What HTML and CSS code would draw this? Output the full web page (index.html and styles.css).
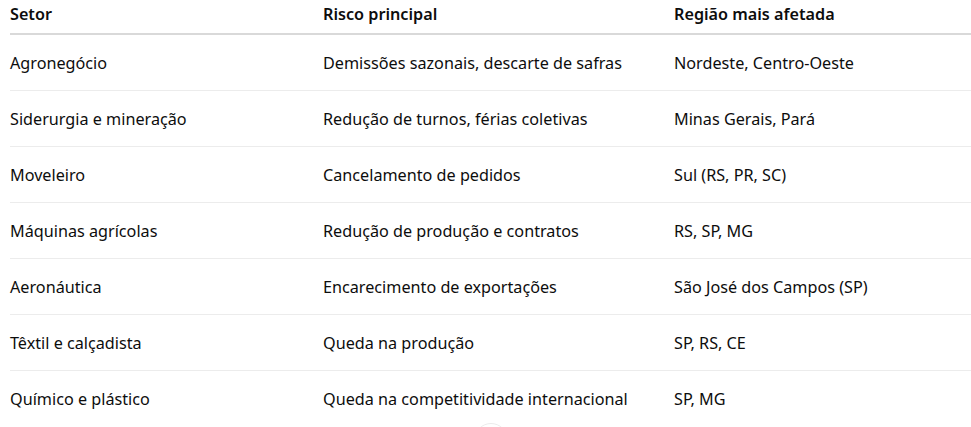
FILE: index.html
```html
<!DOCTYPE html>
<html lang="pt-BR">
<head>
<meta charset="utf-8">
<link rel="stylesheet" href="styles.css">
</head>
<body>
<div class="page">
  <table class="tbl">
    <thead>
      <tr><th>Setor</th><th>Risco principal</th><th>Região mais afetada</th></tr>
    </thead>
    <tbody>
      <tr><td>Agronegócio</td><td>Demissões sazonais, descarte de safras</td><td>Nordeste, Centro-Oeste</td></tr>
      <tr><td>Siderurgia e mineração</td><td>Redução de turnos, férias coletivas</td><td>Minas Gerais, Pará</td></tr>
      <tr><td>Moveleiro</td><td>Cancelamento de pedidos</td><td>Sul (RS, PR, SC)</td></tr>
      <tr><td>Máquinas agrícolas</td><td>Redução de produção e contratos</td><td>RS, SP, MG</td></tr>
      <tr><td>Aeronáutica</td><td>Encarecimento de exportações</td><td>São José dos Campos (SP)</td></tr>
      <tr><td>Têxtil e calçadista</td><td>Queda na produção</td><td>SP, RS, CE</td></tr>
      <tr><td>Químico e plástico</td><td>Queda na competitividade internacional</td><td>SP, MG</td></tr>
    </tbody>
  </table>
  <div class="scroll-btn"></div>
</div>
</body>
</html>
```
FILE: styles.css
```css
html, body {
  margin: 0;
  padding: 0;
  background: #ffffff;
  overflow: hidden;
}
.page {
  position: relative;
  width: 971px;
  height: 427px;
  overflow: hidden;
  padding-left: 10px;
  box-sizing: border-box;
  font-family: "Noto Sans", "Open Sans", sans-serif;
  color: #0d0d0d;
}
.tbl {
  border-collapse: collapse;
  width: 961px;
  table-layout: fixed;
  font-size: 16.2px;
}
.tbl th, .tbl td {
  text-align: left;
  padding: 0;
  white-space: nowrap;
}
.tbl th:nth-child(1), .tbl td:nth-child(1) { width: 313px; }
.tbl th:nth-child(2), .tbl td:nth-child(2) { width: 351px; }
.tbl thead th {
  font-weight: 600;
  height: 34px;
  vertical-align: middle;
  padding-bottom: 6px;
  box-sizing: border-box;
  border-bottom: 2px solid #d9d9d9;
}
.tbl tbody td {
  height: 56px;
  padding-top: 1px;
  box-sizing: border-box;
  border-bottom: 1px solid #ececec;
}
.tbl tbody tr:last-child td { border-bottom: none; }
.scroll-btn {
  position: absolute;
  left: 474px;
  top: 423px;
  width: 32px;
  height: 32px;
  border-radius: 50%;
  border: 1px solid #ececec;
  background: #fff;
}
```
